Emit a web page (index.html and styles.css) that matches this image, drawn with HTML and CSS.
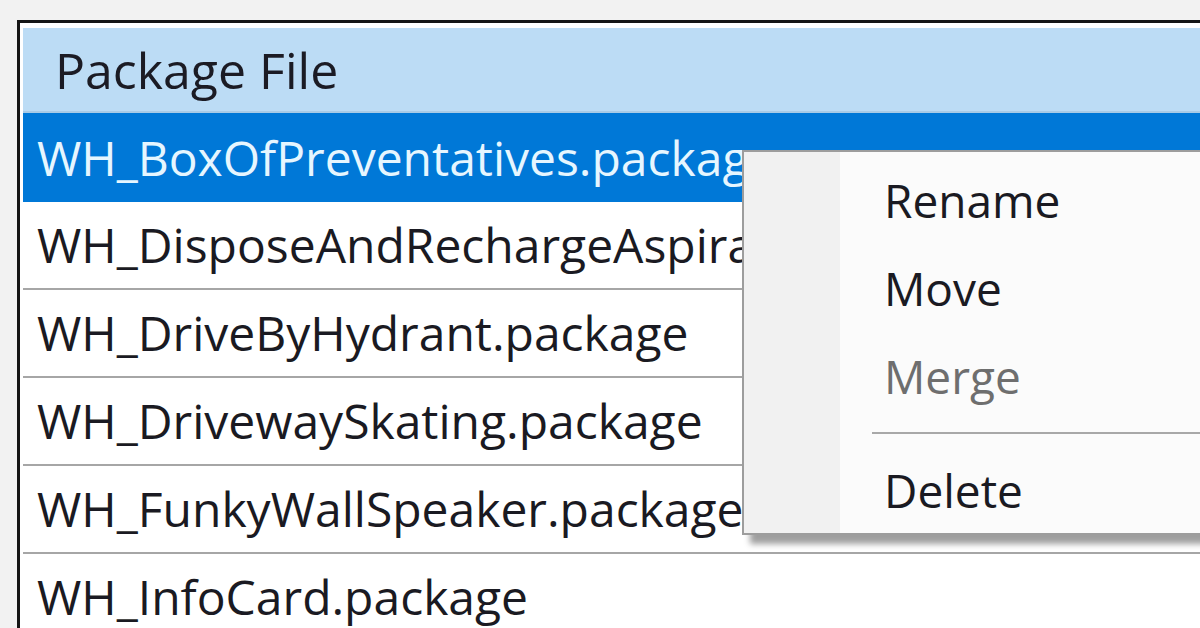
FILE: index.html
```html
<!DOCTYPE html>
<html>
<head>
<meta charset="utf-8">
<link rel="stylesheet" href="styles.css">
</head>
<body>
<div class="page">
  <div class="frame">
    <div class="list">
      <div class="header"><span class="header-cell">Package File</span></div>
      <div class="row selected">WH_BoxOfPreventatives.package</div>
      <div class="row">WH_DisposeAndRechargeAspirations.package</div>
      <div class="row">WH_DriveByHydrant.package</div>
      <div class="row">WH_DrivewaySkating.package</div>
      <div class="row">WH_FunkyWallSpeaker.package</div>
      <div class="row">WH_InfoCard.package</div>
    </div>
  </div>
  <div class="menu">
    <div class="item">Rename</div>
    <div class="item">Move</div>
    <div class="item disabled">Merge</div>
    <div class="sep"></div>
    <div class="item">Delete</div>
  </div>
</div>
</body>
</html>
```
FILE: styles.css
```css
html, body {
  margin: 0;
  padding: 0;
  width: 1200px;
  height: 628px;
  overflow: hidden;
  background: #f2f2f2;
}
.page {
  position: relative;
  width: 1200px;
  height: 628px;
  padding-top: 20px;
  padding-left: 17px;
  box-sizing: border-box;
  overflow: hidden;
  font-family: "Open Sans", "Noto Sans", sans-serif;
}
.frame {
  width: 1183px;
  height: 608px;
  overflow: hidden;
  border-top: 3px solid #151515;
  border-left: 3px solid #151515;
  background: #ffffff;
  padding: 5px 0 0 3px;
  box-sizing: border-box;
}
.list {
  display: flex;
  flex-direction: column;
}
.header {
  height: 83px;
  flex-shrink: 0;
  background: #bcdcf5;
  border-bottom: 2px solid #a9cbe6;
  display: flex;
  align-items: center;
  padding-left: 32px;
  font-size: 50px;
  color: #1b1b24;
  white-space: nowrap;
}
.row {
  height: 86px;
  flex-shrink: 0;
  line-height: 86px;
  border-bottom: 2px solid #a6a6a6;
  padding-left: 14px;
  font-size: 48px;
  color: #1a1a22;
  white-space: nowrap;
}
.row.selected {
  background: #0078d7;
  color: #e6f6ff;
  border-bottom: 0;
  height: 89px;
  line-height: 89px;
}
.menu {
  position: absolute;
  left: 742px;
  top: 150px;
  width: 520px;
  padding: 4px 0 0 0;
  height: 385px;
  box-sizing: border-box;
  border: 2px solid #9d9d9d;
  background: linear-gradient(to right, #f1f1f1 0, #f1f1f1 96px, #fbfbfb 96px);
  box-shadow: 8px 9px 6px rgba(0, 0, 0, 0.38);
  font-family: "Open Sans", "Noto Sans", sans-serif;
  font-size: 46px;
  color: #1a1a22;
}
.item {
  height: 88px;
  line-height: 88px;
  padding-left: 140px;
}
.item.disabled {
  color: #6e6e6e;
}
.sep {
  height: 2px;
  margin: 12px 0 12px 128px;
  background: #a8a8a8;
}
```
